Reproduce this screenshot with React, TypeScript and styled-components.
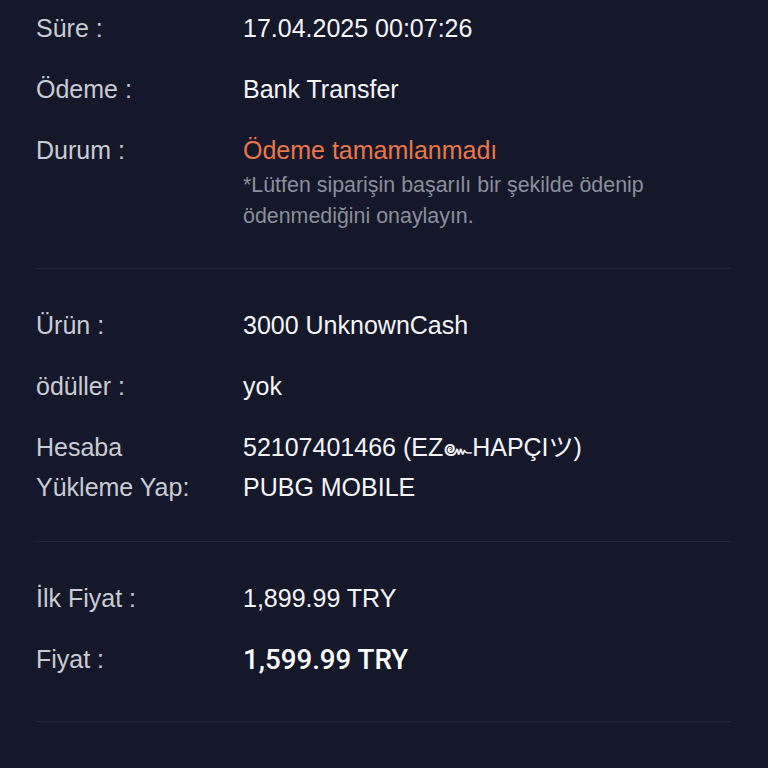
import React from 'react';
import styled, { createGlobalStyle } from 'styled-components';

const GlobalStyle = createGlobalStyle`
    html, body {
        margin: 0;
        padding: 0;
        background: #15182a;
    }
    body {
        font-family: 'Liberation Sans', Arial, 'Noto Sans CJK JP', sans-serif;
    }
`;

const Page = styled.div`
    width: 768px;
    min-height: 768px;
    padding: 0 37px 0 36px;
    box-sizing: border-box;
    background: #15182a;
`;

const Section = styled.div<{ $top: number; $bottom: number }>`
    display: flex;
    flex-direction: column;
    gap: 21px;
    padding-top: ${p => p.$top}px;
    padding-bottom: ${p => p.$bottom}px;
    border-bottom: 1px solid #22263a;
`;

const Row = styled.div`
    display: grid;
    grid-template-columns: 207px 1fr;
    align-items: start;
`;

const Label = styled.div`
    width: 172px;
    font-size: 25px;
    line-height: 40px;
    color: #c9cbd4;
`;

const Value = styled.div<{ $tone?: 'warn' }>`
    font-size: 25px;
    line-height: 40px;
    color: ${p => (p.$tone === 'warn' ? '#ea7649' : '#f5f5f7')};
`;

const Note = styled.div`
    font-size: 21.4px;
    line-height: 31px;
    color: #8b8e9b;
`;

const Price = styled.div`
    font-family: Roboto, 'Liberation Sans', sans-serif;
    font-weight: 500;
    font-size: 27.7px;
    line-height: 42px;
    color: #ffffff;
`;

export default function App() {
    return (
        <Page>
            <GlobalStyle />
            <Section $top={8} $bottom={36}>
                <Row>
                    <Label>Süre :</Label>
                    <Value>17.04.2025 00:07:26</Value>
                </Row>
                <Row>
                    <Label>Ödeme :</Label>
                    <Value>Bank Transfer</Value>
                </Row>
                <Row>
                    <Label>Durum :</Label>
                    <div>
                        <Value $tone="warn">Ödeme tamamlanmadı</Value>
                        <Note>
                            *Lütfen siparişin başarılı bir şekilde ödenip
                            <br />
                            ödenmediğini onaylayın.
                        </Note>
                    </div>
                </Row>
            </Section>
            <Section $top={36} $bottom={34}>
                <Row>
                    <Label>Ürün :</Label>
                    <Value>3000 UnknownCash</Value>
                </Row>
                <Row>
                    <Label>ödüller :</Label>
                    <Value>yok</Value>
                </Row>
                <Row>
                    <Label>Hesaba Yükleme Yap:</Label>
                    <div>
                        <Value>52107401466 (EZ๛HAPÇIツ)</Value>
                        <Value>PUBG MOBILE</Value>
                    </div>
                </Row>
            </Section>
            <Section $top={36} $bottom={40}>
                <Row>
                    <Label>İlk Fiyat :</Label>
                    <Value>1,899.99 TRY</Value>
                </Row>
                <Row>
                    <Label>Fiyat :</Label>
                    <Price>1,599.99 TRY</Price>
                </Row>
            </Section>
        </Page>
    );
}
